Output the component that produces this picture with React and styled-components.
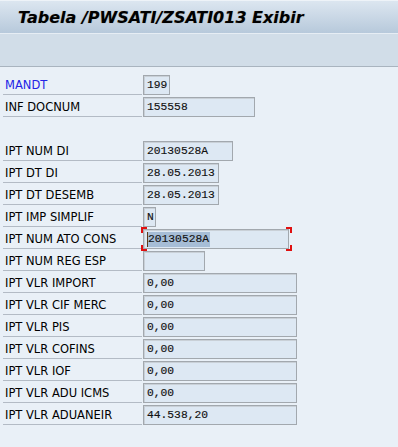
import React from "react";
import styled, { createGlobalStyle } from "styled-components";

const Global = createGlobalStyle`
  html, body { margin: 0; padding: 0; background: #e9f0f7; }
  #root { width: 398px; height: 447px; overflow: hidden; }
`;

const Window = styled.div`
  width: 398px;
  height: 447px;
  background: #e9f0f7;
  display: flex;
  flex-direction: column;
`;

const TitleBar = styled.div`
  height: 32px;
  border-top: 1px solid #eef3f8;
  background: linear-gradient(#dce6f0, #b7c9db);
  display: flex;
  align-items: center;
  padding-left: 18px;
  box-sizing: content-box;
`;

const Title = styled.h1`
  margin: 0;
  font-family: "DejaVu Sans", "Liberation Sans", sans-serif;
  font-weight: bold;
  font-style: oblique;
  font-size: 16px;
  color: #000;
  text-shadow: 0 0 1px rgba(60, 40, 0, 0.35);
`;

const Toolbar = styled.div`
  height: 32px;
  background: #d1dde8;
  border-top: 1px solid #e6edf4;
  border-bottom: 1px solid #a9b4bf;
`;

const Content = styled.div`
  padding: 6px 0 0 3px;
  display: flex;
  flex-direction: column;
`;

const Row = styled.div`
  height: 22px;
  display: flex;
  align-items: flex-end;
`;

const Label = styled.div`
  box-sizing: border-box;
  width: 139px;
  height: 22px;
  padding: 4px 0 0 2px;
  border-bottom: ${(p) => (p.$blank ? "1px solid transparent" : "1px solid #b3bbc5")};
  font-family: "DejaVu Sans", "Liberation Sans", sans-serif;
  font-size: 11.5px;
  line-height: 17px;
  color: ${(p) => (p.$key ? "#2323e6" : "#000")};
  white-space: nowrap;
`;

const FieldWrap = styled.div`
  position: relative;
  margin-left: 1px;
`;

const Field = styled.div`
  box-sizing: border-box;
  width: ${(p) => p.$w}px;
  height: 20px;
  border: 1px solid #a2a8ae;
  box-shadow: inset 1px 1px 0 #c9d0d7;
  background: #dde8f3;
  padding-left: 3px;
  font-family: "Liberation Mono", "DejaVu Sans Mono", monospace;
  font-size: 11.3px;
  -webkit-text-stroke: 0.15px #111;
  line-height: 18px;
  color: #111;
  white-space: nowrap;
  overflow: visible;
`;

const Selected = styled.span`
  background: #a6bdd6;
  border-left: 1px solid #5a3a1a;
  padding: 1px 1px 2px 0;
`;

const Corner = styled.span`
  position: absolute;
  width: 4px;
  height: 4px;
  border-color: #e01010;
  border-style: solid;
  border-width: 0;
  ${(p) => (p.$v === "t" ? "top: -2px;" : "bottom: -2px;")}
  ${(p) => (p.$h === "l" ? "left: -2px;" : "right: -3px;")}
  ${(p) => (p.$v === "t" ? "border-top-width: 2px;" : "border-bottom-width: 2px;")}
  ${(p) => (p.$h === "l" ? "border-left-width: 2px;" : "border-right-width: 2px;")}
`;

const rows = [
  { label: "MANDT", value: "199", w: 27, key: true },
  { label: "INF DOCNUM", value: "155558", w: 112 },
  { blank: true },
  { label: "IPT NUM DI", value: "20130528A", w: 90 },
  { label: "IPT DT DI", value: "28.05.2013", w: 76 },
  { label: "IPT DT DESEMB", value: "28.05.2013", w: 76 },
  { label: "IPT IMP SIMPLIF", value: "N", w: 13 },
  { label: "IPT NUM ATO CONS", value: "20130528A", w: 146, focus: true },
  { label: "IPT NUM REG ESP", value: "", w: 62 },
  { label: "IPT VLR IMPORT", value: "0,00", w: 154 },
  { label: "IPT VLR CIF MERC", value: "0,00", w: 154 },
  { label: "IPT VLR PIS", value: "0,00", w: 154 },
  { label: "IPT VLR COFINS", value: "0,00", w: 154 },
  { label: "IPT VLR IOF", value: "0,00", w: 154 },
  { label: "IPT VLR ADU ICMS", value: "0,00", w: 154 },
  { label: "IPT VLR ADUANEIR", value: "44.538,20", w: 154 },
];

export default function App() {
  return (
    <>
      <Global />
      <Window>
        <TitleBar>
          <Title>Tabela /PWSATI/ZSATI013 Exibir</Title>
        </TitleBar>
        <Toolbar />
        <Content>
          {rows.map((r, i) =>
            r.blank ? (
              <Row key={i}>
                <Label $blank />
              </Row>
            ) : (
              <Row key={i}>
                <Label $key={r.key}>{r.label}</Label>
                <FieldWrap>
                  <Field $w={r.w}>
                    {r.focus ? <Selected>{r.value}</Selected> : r.value}
                  </Field>
                  {r.focus && (
                    <>
                      <Corner $v="t" $h="l" />
                      <Corner $v="t" $h="r" />
                      <Corner $v="b" $h="l" />
                      <Corner $v="b" $h="r" />
                    </>
                  )}
                </FieldWrap>
              </Row>
            )
          )}
        </Content>
      </Window>
    </>
  );
}
